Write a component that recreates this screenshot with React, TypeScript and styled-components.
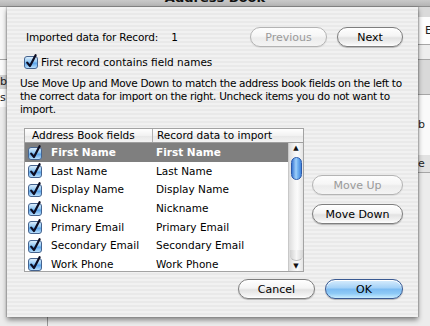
import React from 'react';
import styled, {createGlobalStyle, css} from 'styled-components';

const GlobalStyle = createGlobalStyle`
  html, body { margin: 0; padding: 0; background: #e8e8e8; }
  body { font-family: "DejaVu Sans", "Noto Sans", sans-serif; font-size: 10px; color: #000; }
`;

const Screen = styled.div`
  width: 430px;
  height: 326px;
  overflow: hidden;
  display: flex;
  flex-direction: column;
  background: #e9e9e9;
`;

const TitleBar = styled.div`
  height: 7px;
  flex-shrink: 0;
  overflow: hidden;
  display: flex;
  justify-content: center;
  background: linear-gradient(#c9c9c9, #b4b4b4);
  border-bottom: 1px solid #8e8e8e;
  box-sizing: border-box;
  > span {
    margin-top: -9px;
    font-weight: bold;
    font-size: 13px;
    line-height: 14px;
    color: #111;
  }
`;

const Body = styled.div`
  display: flex;
  height: 310px;
  flex-shrink: 0;
`;

const Strip = styled.div<{$w?: number}>`
  width: ${p => (p.$w ? `${p.$w}px` : 'auto')};
  flex: ${p => (p.$w ? '0 0 auto' : '1')};
  display: flex;
  flex-direction: column;
  overflow: hidden;
  background: #ebebeb;
`;

const Band = styled.div<{$h: number; $bg: string; $line?: boolean}>`
  height: ${p => p.$h}px;
  flex-shrink: 0;
  background: ${p => p.$bg};
  border-bottom: ${p => (p.$line ? '1px solid #a6a6a6' : 'none')};
  box-sizing: border-box;
  font-size: 11px;
  line-height: ${p => p.$h}px;
  color: #222;
  white-space: nowrap;
`;

const BottomStrip = styled.div`
  flex: 1;
  background: #ececec;
  display: flex;
  > i {
    margin-left: 47px;
    width: 1px;
    background: #9a9a9a;
  }
`;

const Sheet = styled.div`
  position: relative;
  z-index: 1;
  width: 411px;
  height: 310px;
  box-sizing: border-box;
  flex-shrink: 0;
  padding: 0 15px 0 13px;
  display: flex;
  flex-direction: column;
  background: repeating-linear-gradient(#f1f1f1 0px, #f1f1f1 2px, #e9e9e9 2px, #e9e9e9 4px);
  box-shadow: 0 3px 5px rgba(0, 0, 0, 0.45), 1px 0 1px rgba(0,0,0,0.15), -1px 0 1px rgba(0,0,0,0.15);
`;

const TopRow = styled.div`
  margin-top: 20px;
  height: 20px;
  display: flex;
  align-items: center;
  padding-left: 6px;
  > .label { font-size: 10.5px; letter-spacing: -0.15px; }
  > .num { margin-left: 13px; font-size: 10.5px; flex: 1; }
`;

const CheckRow = styled.label`
  margin-top: 7px;
  height: 15px;
  padding-left: 4px;
  display: flex;
  align-items: center;
  gap: 3px;
  font-size: 10.5px;
`;

const Paragraph = styled.p`
  margin: 8px 0 0 0;
  font-size: 10.5px;
  line-height: 13px;
  letter-spacing: -0.3px;
`;

const Middle = styled.div`
  margin-top: 12px;
  display: flex;
`;

const SideButtons = styled.div`
  margin-left: 8px;
  padding-top: 47px;
  display: flex;
  flex-direction: column;
  gap: 9px;
  flex: 1;
`;

const BottomRow = styled.div`
  margin-top: 7px;
  display: flex;
  justify-content: flex-end;
  gap: 10px;
`;

const AquaButton = styled.button<{$w: number; $disabled?: boolean; $default?: boolean}>`
  width: ${p => p.$w}px;
  height: 20px;
  box-sizing: border-box;
  border-radius: 10px;
  border: 1px solid #7e7e7e;
  padding: 0;
  font-family: inherit;
  font-size: 11px;
  color: #000;
  background: linear-gradient(#ffffff 0%, #f4f4f4 45%, #e2e2e2 55%, #f2f2f2 85%, #ffffff 100%);
  box-shadow: 0 1px 1px rgba(0,0,0,0.25), inset 0 1px 0 #fff;
  ${p => p.$disabled && css`
    color: #9a9a9a;
    border-color: #b4b4b4;
    box-shadow: 0 1px 1px rgba(0,0,0,0.08);
    background: linear-gradient(#fdfdfd 0%, #f6f6f6 45%, #ececec 55%, #f4f4f4 100%);
  `}
  ${p => p.$default && css`
    border-color: #3a5a92;
    background: linear-gradient(#d9edfd 0%, #a5d2f7 42%, #7dbcf2 52%, #8ecaf6 75%, #c9edff 100%);
  `}
`;

const Table = styled.div`
  width: 280px;
  height: 144px;
  margin-left: 4px;
  box-sizing: border-box;
  border: 1px solid #a3a3a3;
  background: #fff;
  display: grid;
  grid-template-columns: 1fr 15px;
  grid-template-rows: 14px 1fr;
  overflow: hidden;
`;

const Header = styled.div`
  grid-column: 1 / 3;
  display: grid;
  grid-template-columns: 127px 1fr;
  background: linear-gradient(#ffffff, #f2f2f2 50%, #e7e7e7 51%, #f3f3f3);
  border-bottom: 1px solid #9f9f9f;
  font-size: 10.5px;
  line-height: 13px;
  > div { padding-left: 7px; white-space: nowrap; overflow: hidden; }
  > div + div { border-left: 1px solid #b0b0b0; padding-left: 4px; }
`;

const Rows = styled.div`
  display: flex;
  flex-direction: column;
  overflow: hidden;
`;

const Row = styled.div<{$sel?: boolean}>`
  height: 18.6px;
  flex-shrink: 0;
  display: grid;
  grid-template-columns: 26px 105px 1fr;
  align-items: center;
  font-size: 10.5px;
  white-space: nowrap;
  background: ${p => (p.$sel ? '#7f7f7f' : 'transparent')};
  color: ${p => (p.$sel ? '#fff' : '#000')};
  font-weight: ${p => (p.$sel ? 'bold' : 'normal')};
  > .box { padding-left: 3px; display: flex; }
  > span { overflow: hidden; }
`;

const ScrollBar = styled.div`
  display: flex;
  flex-direction: column;
  align-items: center;
  border-left: 1px solid #c8c8c8;
  background: linear-gradient(90deg, #dcdcdc, #f4f4f4 40%, #fbfbfb 60%, #e4e4e4);
  > .arrow { height: 10px; font-size: 7px; line-height: 10px; color: #111; }
  > .thumb {
    margin-top: 4px;
    width: 11px;
    height: 23px;
    border-radius: 6px;
    border: 1px solid #2c5bab;
    box-sizing: border-box;
    background: linear-gradient(90deg, #3a78d4, #9fd0fb 45%, #7ab8f2 60%, #3f83dc);
  }
  > .fill { flex: 1; }
  > .cap {
    width: 13px;
    height: 10px;
    border-radius: 0 0 6px 6px;
    background: linear-gradient(90deg, #d0d0d0, #f6f6f6 50%, #d6d6d6);
    border-bottom: 1px solid #bdbdbd;
  }
`;

const CheckIcon: React.FC = () => (
  <svg width="14" height="15" viewBox="0 0 14 15">
    <defs>
      <linearGradient id="cbg" x1="0" y1="0" x2="0" y2="1">
        <stop offset="0" stopColor="#e3f1fd" />
        <stop offset="0.45" stopColor="#8ec6f3" />
        <stop offset="0.55" stopColor="#5aa3ea" />
        <stop offset="1" stopColor="#c3e6ff" />
      </linearGradient>
    </defs>
    <rect x="0.5" y="2.5" width="13" height="12" rx="2.5" fill="url(#cbg)" stroke="#46648f" />
    <path d="M3.2 8.6 L6 12 L11.6 1.2" fill="none" stroke="#0d0d22" strokeWidth="2.2" strokeLinecap="round" strokeLinejoin="round" />
  </svg>
);

const fields = ['First Name', 'Last Name', 'Display Name', 'Nickname', 'Primary Email', 'Secondary Email', 'Work Phone'];

const App: React.FC = () => {
  return (
    <Screen>
      <GlobalStyle />
      <TitleBar><span>Address Book</span></TitleBar>
      <Body>
        <Strip $w={7}>
          <Band $h={53} $bg="#f7f7f7" $line />
          <Band $h={15} $bg="#fbfbfb" />
          <Band $h={14} $bg="#d2d2d2">bo</Band>
          <Band $h={18} $bg="#fbfbfb">s</Band>
          <Band $h={210} $bg="#ececec" />
        </Strip>
        <Sheet>
          <TopRow>
            <span className="label">Imported data for Record:</span>
            <span className="num">1</span>
            <AquaButton $w={77} $disabled>Previous</AquaButton>
            <AquaButton $w={66} style={{marginLeft: 10}}>Next</AquaButton>
          </TopRow>
          <CheckRow><CheckIcon />First record contains field names</CheckRow>
          <Paragraph>
            Use Move Up and Move Down to match the address book fields on the left to the correct data for import on the right. Uncheck items you do not want to import.
          </Paragraph>
          <Middle>
            <Table>
              <Header>
                <div>Address Book fields</div>
                <div>Record data to import</div>
              </Header>
              <Rows>
                {fields.map((f, i) => (
                  <Row key={f} $sel={i === 0}>
                    <div className="box"><CheckIcon /></div>
                    <span>{f}</span>
                    <span>{f}</span>
                  </Row>
                ))}
              </Rows>
              <ScrollBar>
                <div className="arrow">▲</div>
                <div className="thumb" />
                <div className="fill" />
                <div className="cap" />
                <div className="arrow">▼</div>
              </ScrollBar>
            </Table>
            <SideButtons>
              <AquaButton $w={91} $disabled>Move Up</AquaButton>
              <AquaButton $w={91}>Move Down</AquaButton>
            </SideButtons>
          </Middle>
          <BottomRow>
            <AquaButton $w={77}>Cancel</AquaButton>
            <AquaButton $w={78} $default>OK</AquaButton>
          </BottomRow>
        </Sheet>
        <Strip>
          <Band $h={10} $bg="#dadada" />
          <Band $h={28} $bg="#fdfdfd" $line>&nbsp;&nbsp;E</Band>
          <Band $h={15} $bg="#eeeeee" $line />
          <Band $h={35} $bg="#d9d9d9" $line />
          <Band $h={60} $bg="#fafafa">b</Band>
          <Band $h={18} $bg="#e2e2e2" $line>e</Band>
          <Band $h={144} $bg="#ececec" />
        </Strip>
      </Body>
      <BottomStrip><i /></BottomStrip>
    </Screen>
  );
};

export default App;
